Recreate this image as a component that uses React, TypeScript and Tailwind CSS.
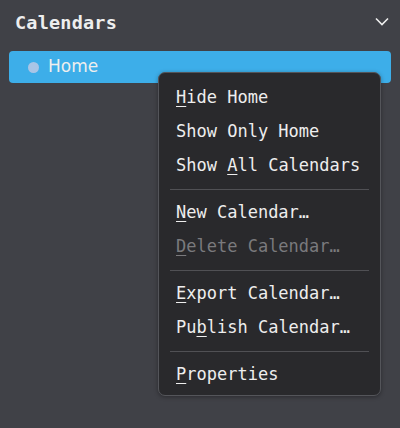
const mono = { fontFamily: '"DejaVu Sans Mono", monospace' };

type Item = { pre: string; key: string; post: string; disabled?: boolean } | 'sep';

const items: Item[] = [
  { pre: '', key: 'H', post: 'ide Home' },
  { pre: 'Show Only Home', key: '', post: '' },
  { pre: 'Show ', key: 'A', post: 'll Calendars' },
  'sep',
  { pre: '', key: 'N', post: 'ew Calendar…' },
  { pre: '', key: 'D', post: 'elete Calendar…', disabled: true },
  'sep',
  { pre: '', key: 'E', post: 'xport Calendar…' },
  { pre: 'Pu', key: 'b', post: 'lish Calendar…' },
  'sep',
  { pre: '', key: 'P', post: 'roperties' },
];

export default function App() {
  return (
    <div className="relative w-[400px] h-[428px] bg-[#404147] overflow-hidden text-[#eeeeee]">
      <div className="flex items-center justify-between pl-[15px] pr-[11px] pt-[3px] h-[42px]">
        <span className="font-bold text-[18.5px] tracking-[0.2px]" style={mono}>Calendars</span>
        <svg width="14" height="9" viewBox="0 0 14 9" className="-mt-[3px]">
          <path d="M1 1.5 L7 7.5 L13 1.5" fill="none" stroke="#eeeeee" strokeWidth="1.6" />
        </svg>
      </div>
      <div className="mx-[9px] mt-[9px] h-[32px] rounded-[4px] bg-[#3daee9] flex items-center pl-[19px] gap-[9px]">
        <span className="w-[11px] h-[11px] rounded-full bg-[#a9c5e6]" />
        <span className="text-[17px]" style={{ fontFamily: '"DejaVu Sans", sans-serif' }}>Home</span>
      </div>

      <div
        className="absolute left-[158px] top-[72px] w-[223px] h-[324px] rounded-[7px] border border-[#54555a] bg-[#29292c] shadow-[0_1px_4px_rgba(0,0,0,0.35)] pt-[8px] flex flex-col"
        style={mono}
      >
        {items.map((it, i) =>
          it === 'sep' ? (
            <div key={i} className="h-[13px] flex items-center px-[11px]">
              <div className="h-px w-full bg-[#505054]" />
            </div>
          ) : (
            <div
              key={i}
              className={`h-[34px] flex items-center pl-[17px] text-[17px] whitespace-pre ${it.disabled ? 'text-[#7a7a7d]' : 'text-[#eeeeee]'}`}
            >
              {it.pre}
              {it.key && <span className="underline underline-offset-[3px] decoration-1">{it.key}</span>}
              {it.post}
            </div>
          )
        )}
      </div>
    </div>
  );
}
